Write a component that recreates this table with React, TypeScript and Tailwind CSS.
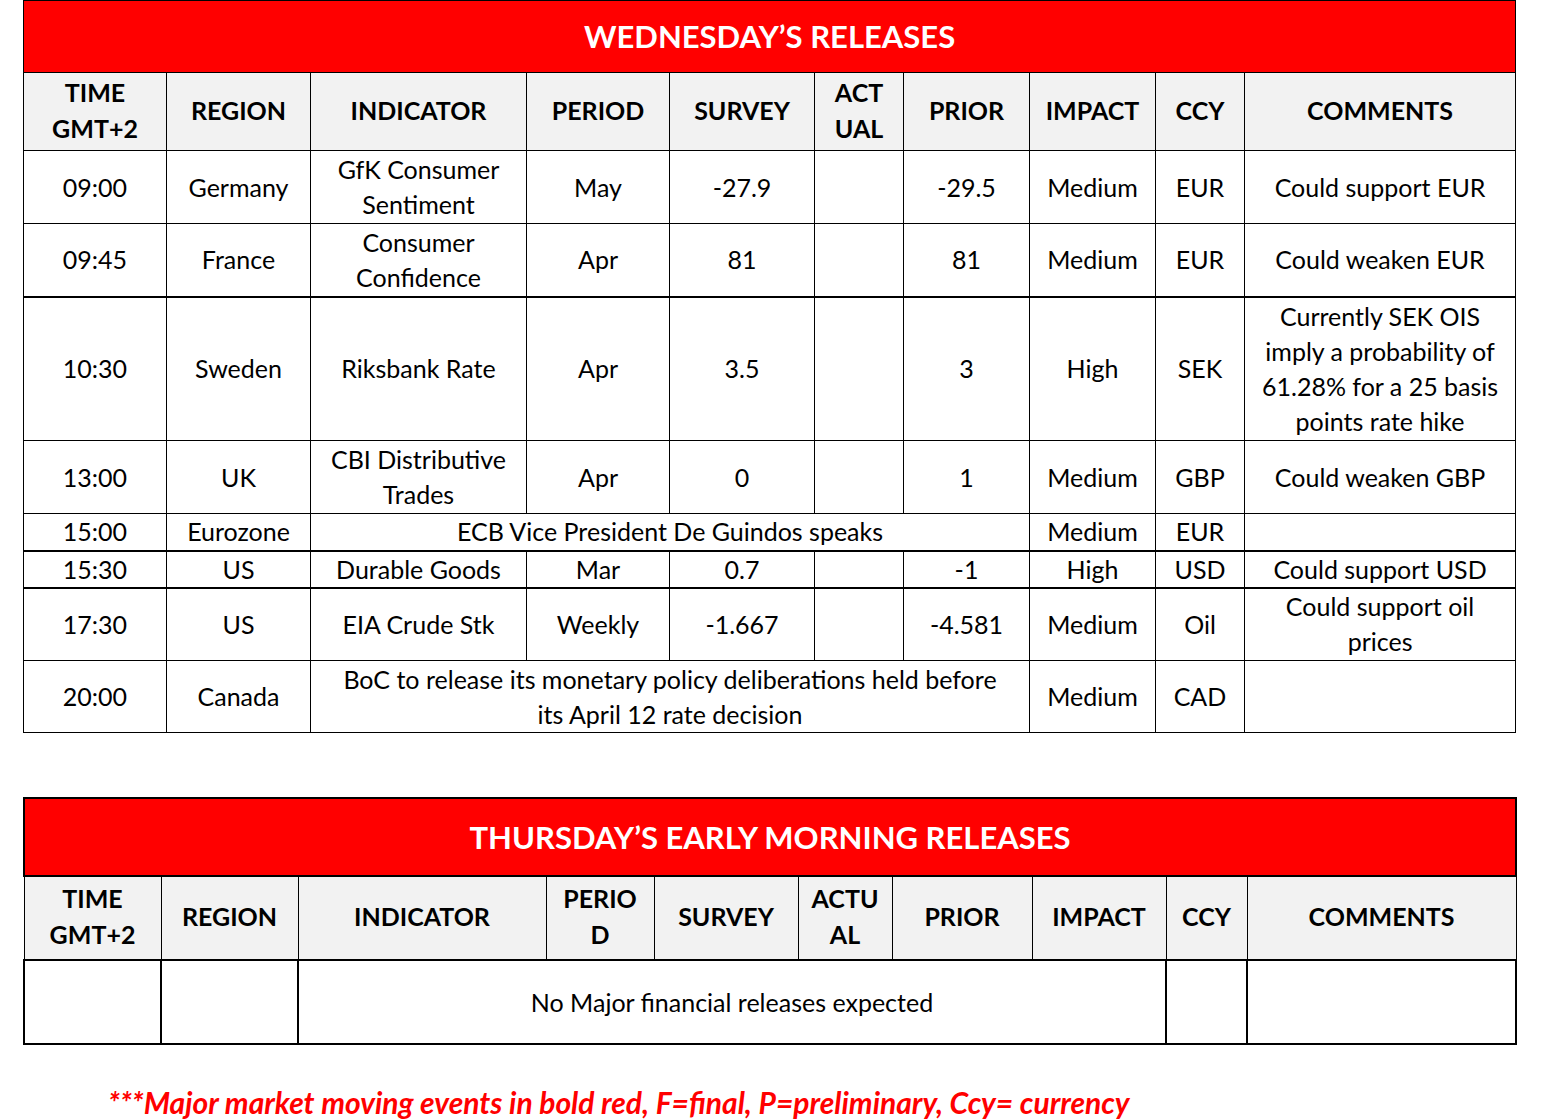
import React from "react";

const F = { fontFamily: "Lato, 'Open Sans', sans-serif" };

const w1 = [143, 144, 216, 143, 145, 89, 126, 126, 89, 271];
const w2 = [137, 137, 248, 108, 144, 94, 140, 134, 81, 269];

function Th({ children }: { children: React.ReactNode }) {
  return (
    <th className="border border-black bg-[#f2f2f2] text-center align-middle font-bold text-[25px] leading-[36px] text-black px-0 pt-0 pb-[4px]">
      {children}
    </th>
  );
}

function Td({
  children,
  colSpan,
  extra = "",
}: {
  children?: React.ReactNode;
  colSpan?: number;
  extra?: string;
}) {
  return (
    <td
      colSpan={colSpan}
      className={`border border-black text-center align-middle text-[25px] leading-[35px] text-black p-0 ${extra}`}
    >
      {children}
    </td>
  );
}

type Row = {
  h: string;
  cells: { t?: React.ReactNode; span?: number }[];
  thickTop?: boolean;
};

const rows: Row[] = [
  {
    h: "h-[73px]",
    cells: [
      { t: "09:00" },
      { t: "Germany" },
      { t: <>GfK Consumer<br />Sentiment</> },
      { t: "May" },
      { t: "-27.9" },
      { t: "" },
      { t: "-29.5" },
      { t: "Medium" },
      { t: "EUR" },
      { t: "Could support EUR" },
    ],
  },
  {
    h: "h-[73px]",
    cells: [
      { t: "09:45" },
      { t: "France" },
      { t: <>Consumer<br />Confidence</> },
      { t: "Apr" },
      { t: "81" },
      { t: "" },
      { t: "81" },
      { t: "Medium" },
      { t: "EUR" },
      { t: "Could weaken EUR" },
    ],
  },
  {
    h: "h-[144px]",
    thickTop: true,
    cells: [
      { t: "10:30" },
      { t: "Sweden" },
      { t: "Riksbank Rate" },
      { t: "Apr" },
      { t: "3.5" },
      { t: "" },
      { t: "3" },
      { t: "High" },
      { t: "SEK" },
      {
        t: (
          <>
            Currently SEK OIS
            <br />
            imply a probability of
            <br />
            61.28% for a 25 basis
            <br />
            points rate hike
          </>
        ),
      },
    ],
  },
  {
    h: "h-[73px]",
    cells: [
      { t: "13:00" },
      { t: "UK" },
      { t: <>CBI Distributive<br />Trades</> },
      { t: "Apr" },
      { t: "0" },
      { t: "" },
      { t: "1" },
      { t: "Medium" },
      { t: "GBP" },
      { t: "Could weaken GBP" },
    ],
  },
  {
    h: "h-[37px]",
    cells: [
      { t: "15:00" },
      { t: "Eurozone" },
      { t: "ECB Vice President De Guindos speaks", span: 5 },
      { t: "Medium" },
      { t: "EUR" },
      { t: "" },
    ],
  },
  {
    h: "h-[37px]",
    thickTop: true,
    cells: [
      { t: "15:30" },
      { t: "US" },
      { t: "Durable Goods" },
      { t: "Mar" },
      { t: "0.7" },
      { t: "" },
      { t: "-1" },
      { t: "High" },
      { t: "USD" },
      { t: "Could support USD" },
    ],
  },
  {
    h: "h-[73px]",
    thickTop: true,
    cells: [
      { t: "17:30" },
      { t: "US" },
      { t: "EIA Crude Stk" },
      { t: "Weekly" },
      { t: "-1.667" },
      { t: "" },
      { t: "-4.581" },
      { t: "Medium" },
      { t: "Oil" },
      { t: <>Could support oil<br />prices</> },
    ],
  },
  {
    h: "h-[72px]",
    cells: [
      { t: "20:00" },
      { t: "Canada" },
      {
        t: (
          <>
            BoC to release its monetary policy deliberations held before
            <br />
            its April 12 rate decision
          </>
        ),
        span: 5,
      },
      { t: "Medium" },
      { t: "CAD" },
      { t: "" },
    ],
  },
];

export default function App() {
  return (
    <div className="bg-white min-h-[1119px] w-[1543px] text-black" style={F}>
      <div className="pl-[23px]">
        <table className="border-collapse table-fixed w-[1493px]">
          <colgroup>
            {w1.map((w, i) => (
              <col key={i} style={{ width: w }} />
            ))}
          </colgroup>
          <thead>
            <tr className="h-[72px]">
              <th
                colSpan={10}
                className="border border-black bg-[#ff0000] text-white font-bold text-[31px] text-center align-middle p-0"
              >
                WEDNESDAY’S RELEASES
              </th>
            </tr>
            <tr className="h-[78px]">
              <Th>TIME<br />GMT+2</Th>
              <Th>REGION</Th>
              <Th>INDICATOR</Th>
              <Th>PERIOD</Th>
              <Th>SURVEY</Th>
              <Th>ACT<br />UAL</Th>
              <Th>PRIOR</Th>
              <Th>IMPACT</Th>
              <Th>CCY</Th>
              <Th>COMMENTS</Th>
            </tr>
          </thead>
          <tbody>
            {rows.map((r, i) => (
              <tr key={i} className={`${r.h} ${r.thickTop ? "border-t-2 border-black" : ""}`}>
                {r.cells.map((c, j) => (
                  <Td key={j} colSpan={c.span} extra={r.thickTop ? "border-t-2" : ""}>
                    {c.t}
                  </Td>
                ))}
              </tr>
            ))}
          </tbody>
        </table>

        <table className="border-collapse table-fixed w-[1492px] mt-[64px]">
          <colgroup>
            {w2.map((w, i) => (
              <col key={i} style={{ width: w }} />
            ))}
          </colgroup>
          <thead>
            <tr className="h-[78px]">
              <th
                colSpan={10}
                className="border-2 border-black bg-[#ff0000] text-white font-bold text-[31px] text-center align-middle p-0"
              >
                THURSDAY’S EARLY MORNING RELEASES
              </th>
            </tr>
            <tr className="h-[84px]">
              <Th>TIME<br />GMT+2</Th>
              <Th>REGION</Th>
              <Th>INDICATOR</Th>
              <Th>PERIO<br />D</Th>
              <Th>SURVEY</Th>
              <Th>ACTU<br />AL</Th>
              <Th>PRIOR</Th>
              <Th>IMPACT</Th>
              <Th>CCY</Th>
              <Th>COMMENTS</Th>
            </tr>
          </thead>
          <tbody>
            <tr className="h-[84px]">
              <Td extra="border-2" />
              <Td extra="border-2" />
              <Td colSpan={6} extra="border-2">No Major financial releases expected</Td>
              <Td extra="border-2" />
              <Td extra="border-2" />
            </tr>
          </tbody>
        </table>
      </div>
      <div className="pl-[108px] mt-[41px] text-[#ff0000] font-bold italic text-[30px] leading-[32px]">
        ***Major market moving events in bold red, F=final, P=preliminary, Ccy= currency
      </div>
    </div>
  );
}
